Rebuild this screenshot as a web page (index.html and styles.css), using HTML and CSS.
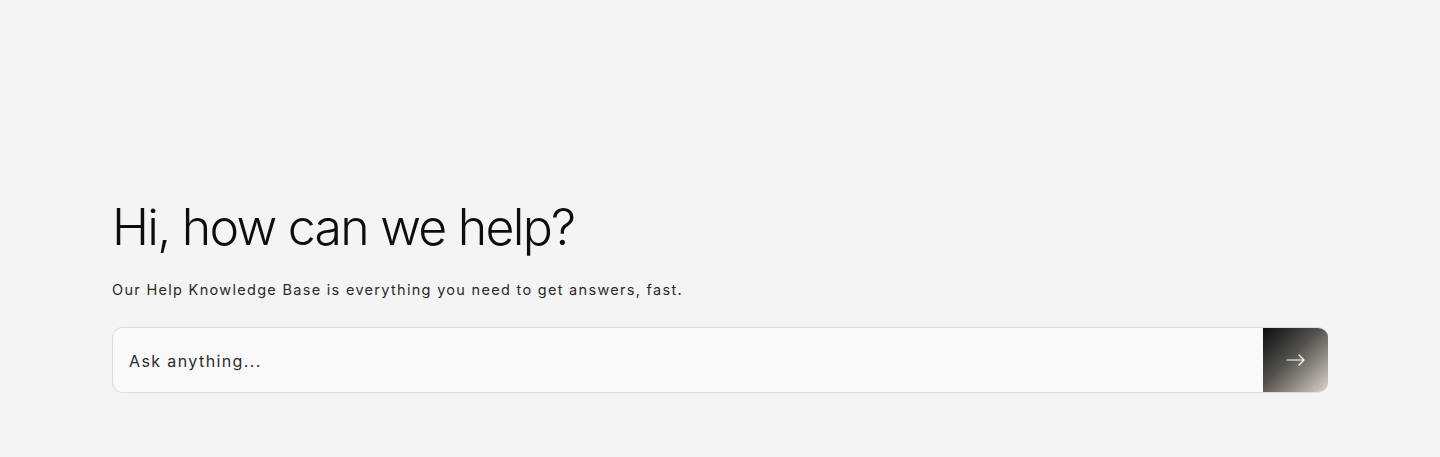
FILE: index.html
```html
<!DOCTYPE html>
<html lang="en">
<head>
<meta charset="utf-8">
<title>Help</title>
<link rel="stylesheet" href="styles.css">
</head>
<body>
<main class="hero">
  <h1 class="title">Hi, how can we help?</h1>
  <p class="subtitle">Our Help Knowledge Base is everything you need to get answers, fast.</p>
  <form class="search">
    <input class="search-input" type="text" placeholder="Ask anything...">
    <button class="search-btn" type="button" aria-label="Search">
      <svg width="20" height="12" viewBox="0 0 20 12" fill="none" stroke="#fff" stroke-width="1.2" stroke-linecap="round" stroke-linejoin="round"><path d="M1 6h17M13 1l5 5-5 5"/></svg>
    </button>
  </form>
</main>
</body>
</html>
```
FILE: styles.css
```css
html, body {
  margin: 0;
  padding: 0;
  background: #f4f4f4;
  font-family: Inter, "Noto Sans", sans-serif;
  color: #111;
}
.hero {
  padding: 196px 112px 0 112px;
  display: flex;
  flex-direction: column;
}
.title {
  margin: 0;
  font-size: 50px;
  font-weight: 300;
  line-height: 62px;
  letter-spacing: -1.75px;
  color: #0d0d0d;
}
.subtitle {
  margin: 22px 0 0 0;
  font-size: 14.5px;
  line-height: 20px;
  letter-spacing: 1.3px;
  color: #2a2a2a;
}
.search {
  margin-top: 27px;
  display: flex;
  height: 66px;
  border: 1px solid #dcdcdc;
  border-right: none;
  border-radius: 10px;
  background: #f9f9f9;
  box-sizing: border-box;
  overflow: hidden;
}
.search-input {
  flex: 1;
  border: none;
  background: transparent;
  outline: none;
  padding: 2px 16px 0 16px;
  font-family: Inter, "Noto Sans", sans-serif;
  font-size: 16px;
  letter-spacing: 1.4px;
  color: #222;
}
.search-input::placeholder {
  color: #2b2b2b;
}
.search-btn {
  width: 65px;
  border: none;
  padding: 0;
  display: flex;
  align-items: center;
  justify-content: center;
  background: linear-gradient(135deg, #0e0e0e 0%, #55524d 45%, #d9d3c8 100%);
  cursor: pointer;
}
```
